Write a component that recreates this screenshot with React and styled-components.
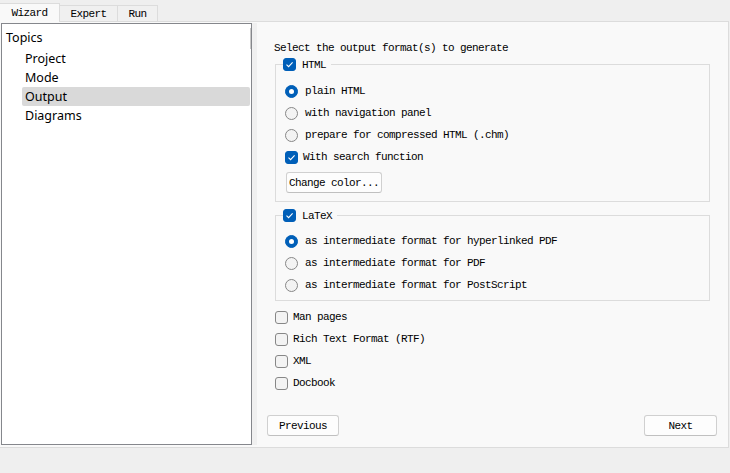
import React from 'react'
import styled, { createGlobalStyle } from 'styled-components'

const GlobalStyle = createGlobalStyle`
  html, body {
    margin: 0;
    padding: 0;
    background: #efefef;
  }
`

const mono = `"Liberation Mono", "DejaVu Sans Mono", monospace`

const Window = styled.div`
  width: 730px;
  height: 473px;
  background: #efefef;
  display: flex;
  flex-direction: column;
  overflow: hidden;
`

const TabBar = styled.div`
  display: flex;
  align-items: flex-end;
  height: 22px;
  margin-bottom: -1px;
  position: relative;
  z-index: 1;
`

const Tab = styled.div`
  height: ${p => (p.active ? '19px' : '17px')};
  width: ${p => p.w}px;
  box-sizing: border-box;
  display: flex;
  align-items: center;
  justify-content: center;
  font-family: ${mono};
  font-size: 11px;
  letter-spacing: -0.6px;
  color: #000;
  background: ${p => (p.active ? '#f9f9f9' : '#f0f0f0')};
  border: 1px solid #dcdcdc;
  border-bottom: ${p => (p.active ? '1px solid #f9f9f9' : '1px solid #dcdcdc')};
  border-left: ${p => (p.first ? 'none' : '1px solid #dcdcdc')};
  margin-left: ${p => (p.first ? '0' : '-1px')};
`

const Pane = styled.div`
  width: 729px;
  height: 427px;
  box-sizing: border-box;
  background: #f9f9f9;
  border: 1px solid #dcdcdc;
  border-left: none;
  display: flex;
  padding: 1px 0 2px 1px;
`

const Tree = styled.div`
  position: relative;
  width: 251px;
  box-sizing: border-box;
  background: #fff;
  border: 1px solid #85878c;
  padding-top: 4px;
  font-family: "Noto Sans", "Open Sans", sans-serif;
  font-size: 12.5px;
  color: #000;
`

const ScrollHint = styled.div`
  position: absolute;
  right: 0;
  top: 4px;
  width: 1px;
  height: 21px;
  background: #c8c8c8;
`

const TreeItem = styled.div`
  height: 19px;
  line-height: 19px;
  margin-left: ${p => (p.depth ? '20px' : '0')};
  margin-right: 1px;
  margin-bottom: ${p => (p.depth ? '0' : '2px')};
  padding-left: ${p => (p.depth ? '3px' : '4px')};
  background: ${p => (p.selected ? '#d9d9d9' : 'transparent')};
  border-radius: 2px;
`

const Splitter = styled.div`
  width: 5px;
  background: #f0f0f0;
`

const Right = styled.div`
  flex: 1;
  display: flex;
  flex-direction: column;
  padding: 0 10px;
  font-family: ${mono};
  font-size: 11px;
  letter-spacing: -0.6px;
  color: #000;
`

const Content = styled.div`
  padding: 18px 8px 0;
  display: flex;
  flex-direction: column;
`

const Heading = styled.div`
  height: 14px;
  line-height: 14px;
  margin-left: -1px;
`

const Group = styled.fieldset`
  margin: ${p => p.top}px 0 0;
  padding: 0 9px ${p => p.bottom}px 9px;
  border: 1px solid #dcdcdc;
  border-radius: 0;
  min-width: 0;
`

const Legend = styled.legend`
  padding: 0 5px 0 0;
  margin-left: -2px;
  display: flex;
  align-items: center;
  height: 13px;
`

const GroupBody = styled.div`
  padding-top: ${p => p.pad}px;
  display: flex;
  flex-direction: column;
`

const Row = styled.label`
  display: flex;
  align-items: center;
  height: 22px;
  gap: ${p => p.gap || 5}px;
  white-space: nowrap;
`

const LegendRow = styled.span`
  display: flex;
  align-items: center;
  gap: 6px;
`

const Box = styled.span`
  width: 13px;
  height: 13px;
  box-sizing: border-box;
  border-radius: 3px;
  flex: none;
  display: flex;
  align-items: center;
  justify-content: center;
  background: ${p => (p.checked ? '#005fb8' : '#f3f3f3')};
  border: 1px solid ${p => (p.checked ? '#005fb8' : '#878787')};
`

const Radio = styled.span`
  width: 13px;
  height: 13px;
  box-sizing: border-box;
  border-radius: 50%;
  flex: none;
  display: flex;
  align-items: center;
  justify-content: center;
  background: ${p => (p.checked ? '#005fb8' : '#f3f3f3')};
  border: 1px solid ${p => (p.checked ? '#005fb8' : '#878787')};
  &::after {
    content: '';
    display: ${p => (p.checked ? 'block' : 'none')};
    width: 5px;
    height: 5px;
    border-radius: 50%;
    background: #fff;
  }
`

const Button = styled.button`
  height: 21px;
  width: ${p => p.w}px;
  box-sizing: border-box;
  background: #fdfdfd;
  border: 1px solid #d0d0d0;
  border-bottom-color: #c0c0c0;
  border-radius: 3px;
  font-family: ${mono};
  font-size: 11px;
  letter-spacing: -0.6px;
  color: #000;
  padding: 0;
  margin: ${p => p.m || '0'};
`

const Spacer = styled.div`
  flex: 1;
`

const ButtonRow = styled.div`
  display: flex;
  justify-content: space-between;
  padding: 0 1px 9px 0;
`

const Gap = styled.div`
  height: ${p => p.h}px;
`

const Check = ({ checked }) => (
  <Box checked={checked}>
    {checked && (
      <svg width="9" height="9" viewBox="0 0 9 9">
        <path d="M1.5 4.6 L3.6 6.6 L7.6 2.4" fill="none" stroke="#fff" strokeWidth="1.1" />
      </svg>
    )}
  </Box>
)

const App = () => (
  <Window>
    <GlobalStyle />
    <TabBar>
      <Tab first active w={60}>Wizard</Tab>
      <Tab w={59}>Expert</Tab>
      <Tab w={41}>Run</Tab>
    </TabBar>
    <Pane>
      <Tree>
        <ScrollHint />
        <TreeItem>Topics</TreeItem>
        <TreeItem depth={1}>Project</TreeItem>
        <TreeItem depth={1}>Mode</TreeItem>
        <TreeItem depth={1} selected>Output</TreeItem>
        <TreeItem depth={1}>Diagrams</TreeItem>
      </Tree>
      <Splitter />
      <Right>
        <Content>
          <Heading>Select the output format(s) to generate</Heading>
          <Group top={3} bottom={8}>
            <Legend>
              <LegendRow><Check checked />HTML</LegendRow>
            </Legend>
            <GroupBody pad={9}>
              <Row gap={7}><Radio checked />plain HTML</Row>
              <Row gap={7}><Radio />with navigation panel</Row>
              <Row gap={7}><Radio />prepare for compressed HTML (.chm)</Row>
              <Row gap={5}><Check checked />With search function</Row>
              <div>
                <Button w={96} m="4px 0 0 1px">Change color...</Button>
              </div>
            </GroupBody>
          </Group>
          <Group top={7} bottom={4}>
            <Legend>
              <LegendRow><Check checked />LaTeX</LegendRow>
            </Legend>
            <GroupBody pad={8}>
              <Row gap={7}><Radio checked />as intermediate format for hyperlinked PDF</Row>
              <Row gap={7}><Radio />as intermediate format for PDF</Row>
              <Row gap={7}><Radio />as intermediate format for PostScript</Row>
            </GroupBody>
          </Group>
          <Gap h={5} />
          <Row><Check />Man pages</Row>
          <Row><Check />Rich Text Format (RTF)</Row>
          <Row><Check />XML</Row>
          <Row><Check />Docbook</Row>
        </Content>
        <Spacer />
        <ButtonRow>
          <Button w={72}>Previous</Button>
          <Button w={73}>Next</Button>
        </ButtonRow>
      </Right>
    </Pane>
  </Window>
)

export default App
